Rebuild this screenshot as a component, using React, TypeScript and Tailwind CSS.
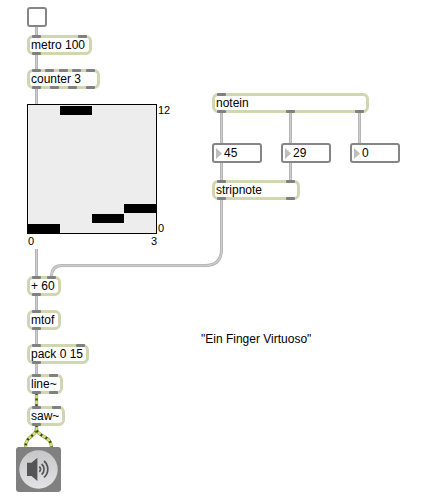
import React from "react";

type BoxProps = {
  label: string;
  x: number;
  y: number;
  w: number;
  inlets: number[];
  outlets: number[];
};

// A patcher object; inlets and outlets are offsets from its left edge.
function ObjectBox({ label, x, y, w, inlets, outlets }: BoxProps) {
  return (
    <div
      className="absolute flex h-5 items-center rounded-[6px] border-[3px] border-[#cfd6b0] bg-white pl-px leading-none whitespace-nowrap"
      style={{ left: x, top: y, width: w }}
    >
      <span>{label}</span>
      {inlets.map((p) => (
        <i key={p} className="absolute -top-[3px] h-[3px] w-[9px] rounded-[1px] bg-[#808080]" style={{ left: p - 3 }} />
      ))}
      {outlets.map((p) => (
        <i key={p} className="absolute -bottom-[3px] h-[3px] w-[9px] rounded-[1px] bg-[#808080]" style={{ left: p - 3 }} />
      ))}
    </div>
  );
}

function NumberBox({ value, x, y }: { value: number; x: number; y: number }) {
  return (
    <div
      className="absolute flex h-5 w-[50px] items-center gap-[2px] rounded-[3px] border-2 border-[#858585] bg-white pl-[2px] leading-none"
      style={{ left: x, top: y }}
    >
      <svg className="h-[11px] w-[6px]" viewBox="0 0 6 11">
        <path d="M0 0 6 5.5 0 11Z" fill="#bdbdbd" />
      </svg>
      <span>{value}</span>
    </div>
  );
}

const cords = [
  "M36.5 27V36",
  "M36.5 54V70",
  "M36.5 88V104",
  "M36.5 249V277",
  "M36.5 295V311",
  "M36.5 329V345",
  "M36.5 363V375",
  "M221.5 112V143",
  "M290.5 112V143",
  "M359.5 112V143",
  "M221.5 163V181",
  "M290.5 163V181",
  "M221.5 199V249Q221.5 265.5 205 265.5H62Q51.5 265.5 51.5 277",
];

const signals = [
  "M36.5 393V407",
  "M36.5 425V430C34 437 26 436 25.5 447",
  "M36.5 425V430C39 437 51 436 51.5 447",
];

function Cords() {
  return (
    <svg className="absolute inset-0" width="438" height="502" fill="none">
      {cords.map((d) => (
        <g key={d}>
          <path d={d} stroke="#b0b0b0" strokeWidth="3" />
          <path d={d} stroke="#cdcdcd" strokeWidth="1.4" />
        </g>
      ))}
      {signals.map((d) => (
        <g key={d}>
          <path d={d} stroke="#7c8550" strokeWidth="3.2" />
          <path d={d} stroke="#d3e56c" strokeWidth="2.4" />
          <path d={d} stroke="#3d4226" strokeWidth="2.4" strokeDasharray="2 3.6" />
        </g>
      ))}
    </svg>
  );
}

// Four-step table with its range labels on the right and below.
function Table() {
  return (
    <section className="absolute top-[104px] left-[27px] grid grid-cols-[130px_auto] gap-x-px text-[11px] leading-[13px]">
      <div className="flex h-[130px] border border-black bg-[#ededed]">
        <div className="flex w-8 items-end">
          <i className="h-[9px] w-full bg-black" />
        </div>
        <div className="flex w-8 items-start pt-px">
          <i className="h-[9px] w-full bg-black" />
        </div>
        <div className="flex w-8 items-end pb-[10px]">
          <i className="h-[9px] w-full bg-black" />
        </div>
        <div className="flex w-8 items-end pb-5">
          <i className="h-[9px] w-full bg-black" />
        </div>
      </div>
      <div className="-mb-px flex flex-col justify-between">
        <span>12</span>
        <span>0</span>
      </div>
      <div className="flex justify-between pt-px pl-px">
        <span>0</span>
        <span>3</span>
      </div>
    </section>
  );
}

function Speaker() {
  return (
    <svg className="absolute top-[447px] left-[16px]" width="45" height="45" fill="none">
      <defs>
        <linearGradient id="disc" x1="0" y1="0" x2="0" y2="1">
          <stop offset="0" stopColor="#c6c6c8" />
          <stop offset="1" stopColor="#e3e3e6" />
        </linearGradient>
      </defs>
      <rect width="45" height="45" rx="3" fill="#808080" />
      <circle cx="22.5" cy="22.5" r="19.2" fill="url(#disc)" />
      <path d="M11 15.7H15.5L21.4 10.8V34L15.5 29H11Z" fill="#555" />
      <path d="M23.2 19.8A3 3 0 0 1 23.2 24.8" stroke="#555" strokeWidth="1.7" />
      <path d="M25.6 17A7 7 0 0 1 25.6 27.6" stroke="#555" strokeWidth="1.7" />
      <path d="M28 14A10.8 10.8 0 0 1 28 30.4" stroke="#555" strokeWidth="1.7" />
    </svg>
  );
}

export default function App() {
  return (
    <main className="relative h-[502px] w-[438px] overflow-hidden bg-white font-['Liberation_Sans',Arial,sans-serif] text-[12px] text-black">
      <Cords />
      <div className="absolute top-[7px] left-[27px] h-5 w-5 rounded-[3px] border-2 border-[#858585] bg-white" />
      <ObjectBox label="metro 100" x={27} y={35} w={65} inlets={[5, 51]} outlets={[5]} />
      <ObjectBox label="counter 3" x={27} y={69} w={73} inlets={[5, 18, 32, 45, 59]} outlets={[5, 23, 41, 59]} />
      <Table />
      <ObjectBox label="+ 60" x={27} y={276} w={34} inlets={[5, 20]} outlets={[5]} />
      <ObjectBox label="mtof" x={27} y={310} w={34} inlets={[5]} outlets={[5]} />
      <ObjectBox label="pack 0 15" x={27} y={344} w={62} inlets={[5, 49]} outlets={[5]} />
      <ObjectBox label="line~" x={27} y={374} w={36} inlets={[5, 22]} outlets={[5, 22]} />
      <ObjectBox label="saw~" x={27} y={406} w={38} inlets={[5, 25]} outlets={[5]} />
      <Speaker />
      <ObjectBox label="notein" x={212} y={93} w={157} inlets={[5]} outlets={[5, 74, 143]} />
      <NumberBox value={45} x={212} y={143} />
      <NumberBox value={29} x={281} y={143} />
      <NumberBox value={0} x={350} y={143} />
      <ObjectBox label="stripnote" x={212} y={180} w={88} inlets={[5, 74]} outlets={[5, 74]} />
      <p className="absolute top-[332px] left-[201px] leading-[14px] whitespace-nowrap">"Ein Finger Virtuoso"</p>
    </main>
  );
}
